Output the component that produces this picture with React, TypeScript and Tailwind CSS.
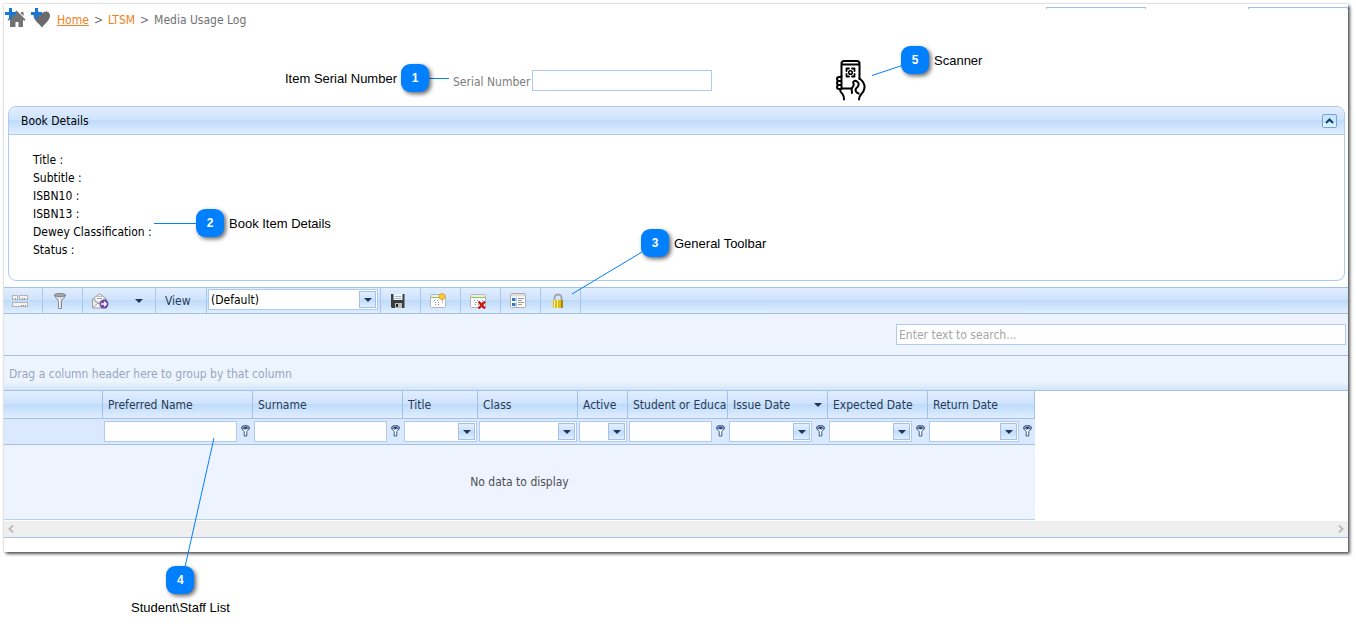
import type { ReactNode } from "react";

type Column = {
  label: string;
  width: string;
  filter?: "text" | "select";
  funnel?: boolean;
  sorted?: boolean;
};

const COLUMNS: Column[] = [
  { label: "", width: "w-[99px]" },
  { label: "Preferred Name", width: "w-[150px]", filter: "text", funnel: true },
  { label: "Surname", width: "w-[150px]", filter: "text", funnel: true },
  { label: "Title", width: "w-[75px]", filter: "select" },
  { label: "Class", width: "w-[100px]", filter: "select" },
  { label: "Active", width: "w-[50px]", filter: "select" },
  { label: "Student or Educa", width: "w-[100px]", filter: "text", funnel: true },
  { label: "Issue Date", width: "w-[100px]", filter: "select", funnel: true, sorted: true },
  { label: "Expected Date", width: "w-[100px]", filter: "select", funnel: true },
  { label: "Return Date", width: "w-[107px]", filter: "select", funnel: true },
];

const BOOK_FIELDS = ["Title", "Subtitle", "ISBN10", "ISBN13", "Dewey Classification", "Status"];

const BAR = "bg-[linear-gradient(#e2eeff_0%,#cde2fd_49%,#bfdbfa_50%,#e0eeff_100%)]";

function Caret() {
  return (
    <svg width="8" height="4" viewBox="0 0 8 4" className="shrink-0" aria-hidden="true">
      <path d="M0 0h8L4 4z" fill="#20365a" />
    </svg>
  );
}

function Combo({ id, label, value = "" }: { id?: string; label?: string; value?: string }) {
  return (
    <div className="relative h-[21px] min-w-0 flex-1">
      <select
        id={id}
        aria-label={label}
        className="block h-full w-full appearance-none border border-[#aecaf0] bg-white pr-5 pl-[2px] text-black outline-none"
      >
        <option>{value}</option>
      </select>
      <span className={`pointer-events-none absolute top-[2px] right-[2px] flex h-[17px] w-[17px] items-center justify-center border border-[#a3c0e8] ${BAR}`}>
        <Caret />
      </span>
    </div>
  );
}

function FilterFunnel({ label }: { label: string }) {
  return (
    <button type="button" aria-label={`Filter ${label}`} className="flex h-[21px] w-4 shrink-0 items-start justify-center pt-[4px]">
      <svg width="9" height="12" viewBox="0 0 9 12">
        <path d="M.6 2.500v1.300L3.200 6.500V11h2.600V6.500l2.600-2.700V2.500z" fill="#fff" stroke="#3b5a88" />
        <ellipse cx="4.500" cy="2.300" rx="3.900" ry="1.700" fill="#8fa6c8" stroke="#3b5a88" />
        <path d="M2.500 2h4L4.500 4z" fill="#20365a" />
      </svg>
    </button>
  );
}

function ToolButton({ label, first, children }: { label: string; first?: boolean; children: ReactNode }) {
  return (
    <button
      type="button"
      aria-label={label}
      className={`flex items-center border-r border-[#a8c6ee] ${first ? "w-[39px] pl-2" : "w-10 pl-[9px]"}`}
    >
      <svg width="16" height="16" viewBox="0 0 16 16">
        {children}
      </svg>
    </button>
  );
}

function CalendarSheet() {
  return (
    <>
      <rect x=".5" y="1.500" width="15" height="13" rx="1" fill="#fff" stroke="#b4b8be" />
      <path d="M1 2h14v2H1z" fill="#e9ebee" />
      <path d="M1 4.500h14" stroke="#8ccf3c" />
      <path d="M4 7.500h1m2 0h1m4 0h1M5 9.500h1m2 0h1m3 0h1M5 11.500h1m2 0h1" stroke="#8a8f96" />
    </>
  );
}

function ScannerIcon() {
  return (
    <svg width="30" height="41" viewBox="0 0 30 41" fill="none" stroke="#000" strokeWidth="2" strokeLinejoin="round" strokeLinecap="round" aria-hidden="true">
      <path d="M5.500 16V3.500Q5.500 1 8 1h13Q23.500 1 23.500 3.500V19M6 4.500h17" />
      <path d="M5.500 17H3Q1 17 1 19t2 2h2.500M3 21Q1 21 1 23t2 2h2.500M3 25Q1 25 1 27t2 2h2.500M5.500 16v13M6 28.500h9" />
      <path d="M4 29.500q0 2.500 2.500 4.500Q8 36 8 39.500" />
      <path d="M22.500 33.500c-3.500-1.500-3.500-4-2-5.500 2.500-2 3-5 .5-6.500-2-1.500-4.500 0-3.500 2 1 1.500-.5 3-1.500 4.500-.8 1.500 0 3 0 5M23.500 18.500q5.500 4 5 9.500-.5 3.500-3.500 6.500-2 2-2 5" />
      <path d="M10.500 11V8.500H13M16 8.500h2.500V11M18.500 14v2.500H16M13 16.500h-2.500V14" strokeWidth="1.800" />
      <circle cx="14.500" cy="12.500" r="1.800" strokeWidth="1.500" />
    </svg>
  );
}

function Callout({ n, text, position, stacked }: { n: number; text: string; position: string; stacked?: "below" | "before" }) {
  const direction = stacked === "below" ? "flex-col gap-[3px]" : stacked === "before" ? "flex-row-reverse gap-1" : "gap-[5px]";
  return (
    <div className={`absolute flex items-center font-['Liberation_Sans',Arial,sans-serif] text-[13px] leading-[18px] whitespace-nowrap text-black ${direction} ${position}`}>
      <span className="flex h-7 w-7 items-center justify-center rounded-[9px] bg-[#0080ff] text-xs font-bold text-white shadow-[2px_2px_4px_rgba(0,0,0,0.6)]">
        {n}
      </span>
      <span className="pt-[2px]">{text}</span>
    </div>
  );
}

function Breadcrumb() {
  return (
    <nav className="flex flex-1 items-center pt-[1px] text-[#707070]">
      <button type="button" aria-label="Set as home page" className="ml-[1px]">
        <svg width="21" height="20" viewBox="0 0 21 20">
          <path d="M11.500 2.500l9 9-1 1.200-1.500-.8V19h-4.500v-5h-3v5H5v-7.500l-1.500 1.200-1-1.200zM16 4h2.500v4L16 5.800z" fill="#727272" />
          <path d="M0 5.500h11M5.500 0v11" stroke="#1878d8" strokeWidth="3" />
        </svg>
      </button>
      <button type="button" aria-label="Add to favourites" className="ml-[5px]">
        <svg width="20" height="20" viewBox="0 0 20 20">
          <path d="M11 19.500C8 15.500 2.500 12 2.500 7.500c0-4.500 6-5.500 8.500-2C13.500 2 19 3 19 7.500c0 4.500-5 8-8 12z" fill="#6a6a6a" />
          <path d="M0 5.500h11M5.500 0v11" stroke="#1878d8" strokeWidth="3" />
        </svg>
      </button>
      <div className="flex gap-[5px] pt-[3px] pl-[6px]">
        <a href="#home" className="text-[#f08020] underline">Home</a>
        <span>&gt;</span>
        <a href="#ltsm" className="text-[#f08020]">LTSM</a>
        <span>&gt;</span>
        <span>Media Usage Log</span>
      </div>
    </nav>
  );
}

function BookDetails() {
  return (
    <section className="mr-[3px] ml-1 overflow-hidden rounded-[8px] border border-[#aecaf0] bg-white text-black">
      <header className={`flex h-7 items-center justify-between border-b border-[#aecaf0] pr-[7px] pl-3 ${BAR}`}>
        <h2>Book Details</h2>
        <button type="button" aria-label="Collapse book details">
          <svg width="15" height="14" viewBox="0 0 15 14">
            <rect x=".5" y=".5" width="14" height="13" rx="1.500" fill="#c9e4fd" stroke="#7c9fe0" />
            <path d="M1 9h13v4H1z" fill="#d4f5ff" />
            <path d="M4 9l3.500-3.500L11 9" fill="none" stroke="#0d3f70" strokeWidth="2" />
          </svg>
        </button>
      </header>
      <ul className="px-6 pt-4 pb-[21px] leading-[18px]">
        {BOOK_FIELDS.map((field) => (
          <li key={field}>{field} :</li>
        ))}
      </ul>
    </section>
  );
}

function Toolbar() {
  return (
    <div className={`mt-[6px] flex h-[27px] border-y border-[#a3c0e8] ${BAR}`}>
      <ToolButton label="Customise columns" first>
        <g fill="#f3f3f3" stroke="#b2b4b8">
          <rect x="0.500" y="2.500" width="5" height="4" />
          <rect x="7.500" y="2.500" width="8" height="4" />
          <rect x="0.500" y="9.500" width="15" height="4" />
        </g>
        <path d="M3 5.500h1M10 5.500h1m1 0h1M9 12.500h1m1 0h1m1 0h1" stroke="#888" />
      </ToolButton>
      <ToolButton label="Filter">
        <path d="M2.500 2c0 3 4 4 4 7v6.500h3V9c0-3 4-4 4-7z" fill="#d9dbde" stroke="#85898f" />
        <ellipse cx="8" cy="2" rx="5.500" ry="1.500" fill="#a9acb1" stroke="#7e8288" />
        <path d="M7.500 6v9" stroke="#fff" />
      </ToolButton>
      <button type="button" aria-label="Export" className="flex w-[73px] items-center border-r border-[#a8c6ee] pl-[9px]">
        <svg width="17" height="16" viewBox="0 0 17 16">
          <path d="M.5 6L7.500.8l7 5.200v9H.5z" fill="#f1f1f1" stroke="#999ca1" />
          <path d="M3 3.500h9V9H3z" fill="#fff" stroke="#b9bbc0" />
          <path d="M5 5.500h5M1 6l6 5 7-5M1 14.500L6 10" fill="none" stroke="#9da0a6" />
          <circle cx="12" cy="11" r="4.500" fill="#6b4aa8" />
          <path d="M9 11h5M12 8.800l2.300 2.200L12 13.200" fill="none" stroke="#fff" strokeWidth="1.300" />
        </svg>
        <span className="ml-[26px]">
          <Caret />
        </span>
      </button>
      <label htmlFor="view-select" className="flex w-[51px] items-center border-r border-[#a8c6ee] pl-[9px]">View</label>
      <div className="flex w-[174px] items-start border-r border-[#a8c6ee] pt-[1px] pr-[2px] pl-[1px]">
        <Combo id="view-select" value="(Default)" />
      </div>
      <ToolButton label="Save view">
        <path d="M1 1h13.500v14H2l-1-1z" fill="#3c3c3c" />
        <path d="M3.500 1h9v6h-9z" fill="#f4f7fa" />
        <path d="M4.500 3.500h7m-7 2h7" stroke="#9cbcd0" />
        <path d="M5 10h7v5H5z" fill="#bcbcbc" />
        <path d="M6 11h2v3H6z" fill="#222" />
      </ToolButton>
      <ToolButton label="New view">
        <CalendarSheet />
        <circle cx="12" cy="3.500" r="3" fill="#ffc928" stroke="#dfa352" />
      </ToolButton>
      <ToolButton label="Delete view">
        <CalendarSheet />
        <path d="M8.500 8.500l6.500 7M15 8.500l-6.500 7" stroke="#cc1414" strokeWidth="2.400" />
      </ToolButton>
      <ToolButton label="Layout">
        <rect x=".5" y=".5" width="15" height="14" rx="1" fill="#fff" stroke="#a9acb2" />
        <path d="M1 1h14v2.500H1z" fill="#dcdee1" />
        <path d="M2 5h3.500v3H2zM2 10h3.500v3H2z" fill="#2d78c8" />
        <path d="M6.500 4v10" stroke="#c6c8cb" />
        <path d="M8 5.500h6m-6 2h4m-4 2h6m-6 2h4" stroke="#999" />
      </ToolButton>
      <ToolButton label="Lock">
        <path d="M4.500 8V4.500a3.500 3 0 0 1 7 0V8" fill="none" stroke="#a3a3a3" strokeWidth="1.800" />
        <path d="M3 7h10v8H3z" fill="#dcbc1e" />
        <path d="M4.500 7v8m3-8v8" stroke="#fff08a" />
        <path d="M12 7v8" stroke="#a8860c" strokeWidth="2" />
      </ToolButton>
    </div>
  );
}

function UsageGrid() {
  return (
    <table className="w-[1031px] table-fixed border-separate border-spacing-0">
      <colgroup>
        {COLUMNS.map((col) => (
          <col key={col.label} className={col.width} />
        ))}
      </colgroup>
      <thead>
        <tr>
          {COLUMNS.map((col) => (
            <th key={col.label} className={`h-7 border-r border-b border-[#a3c0e8] p-0 text-left font-normal ${BAR}`}>
              <div className="flex items-center justify-between overflow-hidden pl-[5px] whitespace-nowrap has-[svg]:pr-[5px]">
                {col.label}
                {col.sorted && <Caret />}
              </div>
            </th>
          ))}
        </tr>
        <tr>
          {COLUMNS.map((col) => (
            <td key={col.label} className="h-[26px] border-b border-[#a3c0e8] bg-[#dae9ff] p-0">
              {col.filter && (
                <div className={col.funnel ? "flex pl-[1px]" : "flex px-[1px]"}>
                  {col.filter === "text" ? (
                    <input aria-label={col.label} className="h-[21px] min-w-0 flex-1 border border-[#aecaf0] bg-white px-1 outline-none" />
                  ) : (
                    <Combo label={col.label} />
                  )}
                  {col.funnel && <FilterFunnel label={col.label} />}
                </div>
              )}
            </td>
          ))}
        </tr>
      </thead>
      <tbody>
        <tr>
          <td colSpan={COLUMNS.length} className="h-[75px] border-b border-[#b4d0f4] bg-[#edf3ff] p-0 text-center text-[#4f4f4f]">
            No data to display
          </td>
        </tr>
      </tbody>
    </table>
  );
}

// Connector strokes between the callout badges and what they point at.
function CalloutLines() {
  return (
    <svg className="pointer-events-none absolute top-0 left-0" width="1000" height="600" stroke="#0080ff" strokeWidth="1" fill="none" aria-hidden="true">
      <path d="M429 78.500h20M154 223.500h43M642 252l-70 42M185 567l29-129M902 65.500l-30 10" />
    </svg>
  );
}

export default function App() {
  return (
    <div className="relative bg-white pt-1 pr-2 pb-[79px] pl-1 font-['DejaVu_Sans_Condensed',Tahoma,sans-serif] text-[12px] leading-4 text-[#283b56]">
      <main className="bg-white pb-[14px] shadow-[0_0_2px_rgba(0,0,0,0.25),2px_2px_3px_rgba(0,0,0,0.65)]">
        <div className="flex items-start pt-[3px]">
          <Breadcrumb />
          <div className="mr-[102px] h-[2px] w-[100px] border border-b-0 border-[#a3c0e8]" />
          <div className="h-[2px] w-[100px] border border-b-0 border-[#a3c0e8]" />
        </div>

        <div className="flex items-center pt-8 pb-[5px] pl-[449px]">
          <label htmlFor="serial" className="pt-[2px] text-[#7d7d7d]">Serial Number</label>
          <input id="serial" className="ml-[2px] h-[21px] w-[180px] border border-[#aecaf0] px-1 text-black outline-none" />
          <button type="button" aria-label="Scan" className="ml-[124px]">
            <ScannerIcon />
          </button>
        </div>

        <BookDetails />
        <Toolbar />

        <div className="flex justify-end border-b border-[#a3c0e8] bg-[#edf4fe] pt-[10px] pr-[2px] pb-[10px]">
          <input
            type="search"
            aria-label="Search"
            placeholder="Enter text to search..."
            className="h-[21px] w-[450px] border border-[#aecaf0] bg-white px-[2px] outline-none placeholder:text-[#a6a6a6]"
          />
        </div>

        <div className="flex h-[35px] items-center border-b border-[#a3c0e8] bg-[linear-gradient(#ecf4fe_75%,#d2e5f6)] pt-[2px] pl-[5px] text-[#98a6bf]">
          Drag a column header here to group by that column
        </div>

        <div className="overflow-hidden">
          <UsageGrid />
        </div>

        <div className="mt-[1px] flex h-[17px] items-center justify-between border-b border-[#a3c0e8] bg-[#efefef] px-1">
          <button type="button" aria-label="Scroll left">
            <svg width="6" height="8" viewBox="0 0 6 8" fill="none" stroke="#bdbdbd" strokeWidth="2">
              <path d="M5 .5L1.500 4 5 7.500" />
            </svg>
          </button>
          <button type="button" aria-label="Scroll right">
            <svg width="6" height="8" viewBox="0 0 6 8" fill="none" stroke="#bdbdbd" strokeWidth="2">
              <path d="M1 .5L4.500 4 1 7.500" />
            </svg>
          </button>
        </div>
      </main>

      <CalloutLines />
      <Callout n={1} text="Item Serial Number" position="top-[64px] left-[285px]" stacked="before" />
      <Callout n={2} text="Book Item Details" position="top-[209px] left-[196px]" />
      <Callout n={3} text="General Toolbar" position="top-[229px] left-[641px]" />
      <Callout n={4} text={"Student\\Staff List"} position="top-[566px] left-[131px]" stacked="below" />
      <Callout n={5} text="Scanner" position="top-[46px] left-[901px]" />
    </div>
  );
}
